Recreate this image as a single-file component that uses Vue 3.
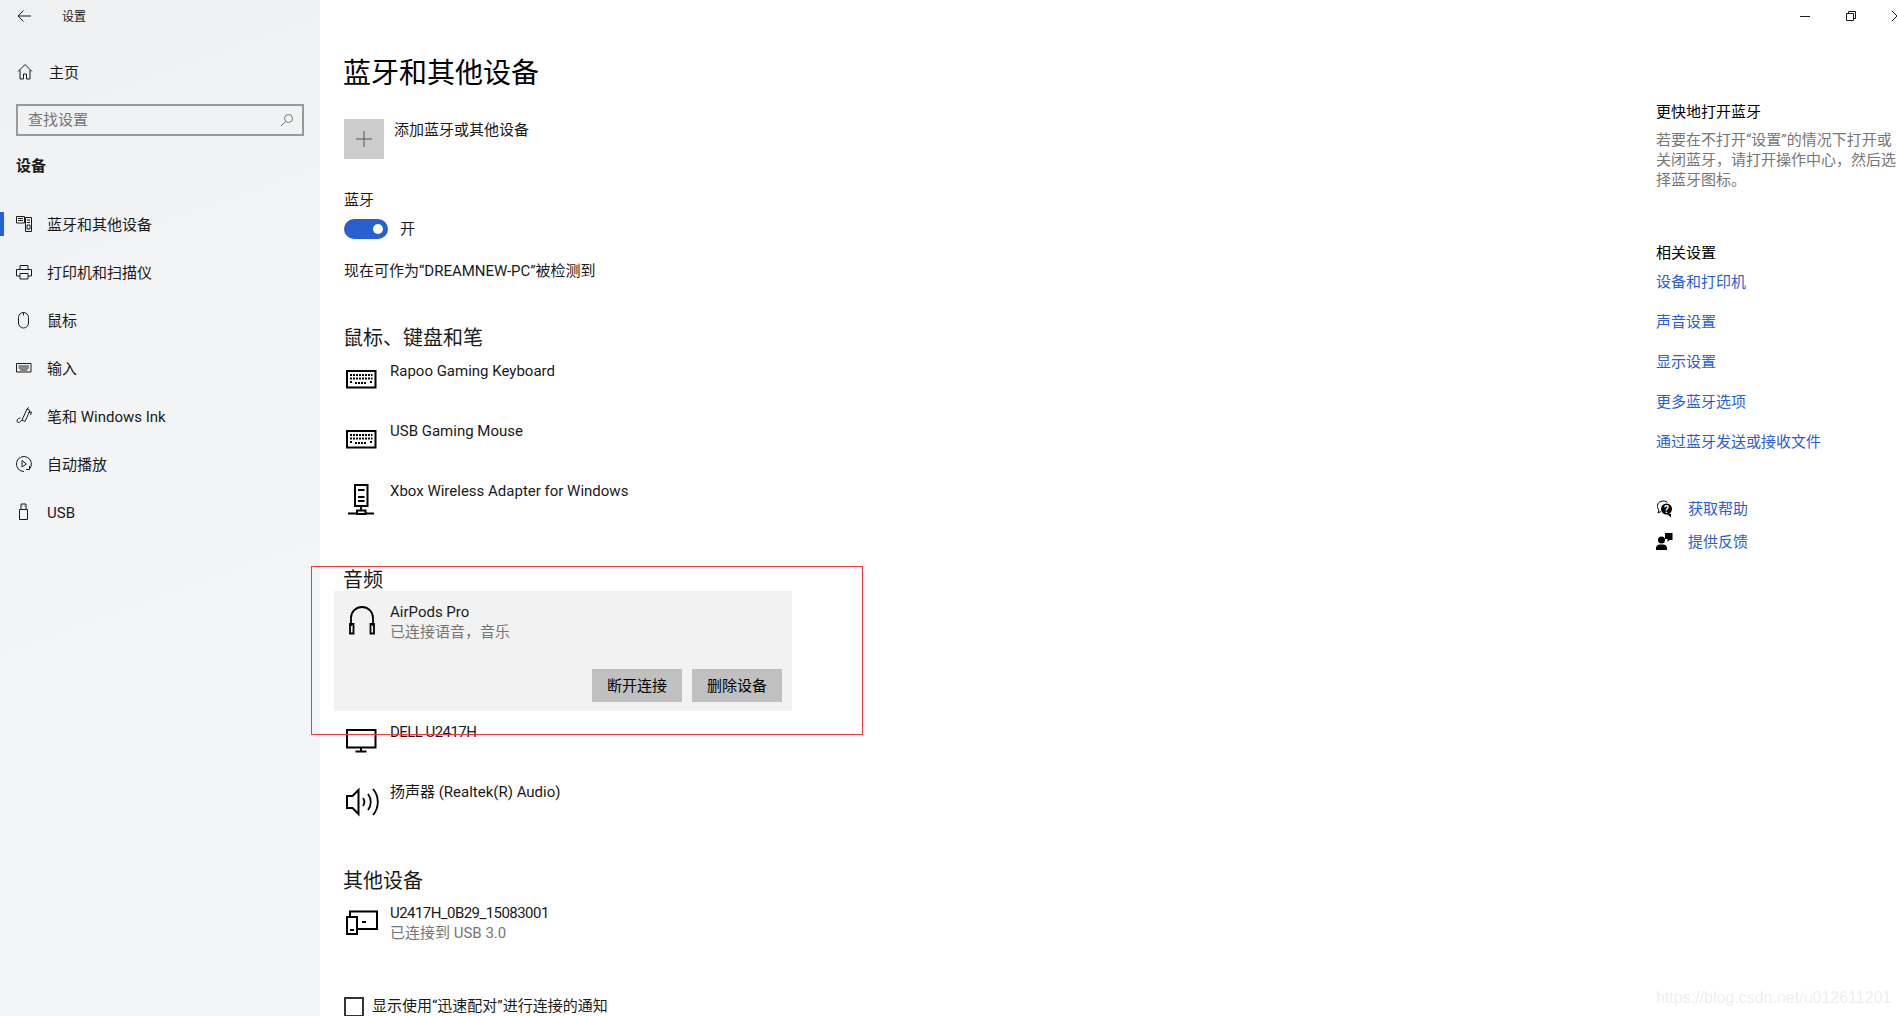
<template>
  <div class="window">
    <aside class="sidebar">
      <div class="titlebar">
        <svg class="back-icon" width="20" height="20" viewBox="0 0 20 20">
          <path d="M7.500 3.500 2 9h13M2 9l5.500 5.500" />
        </svg>
        <span class="app-name">设置</span>
      </div>
      <div class="home-link">
        <svg class="nav-icon" width="20" height="20" viewBox="0 0 20 20">
          <path d="M3 9.500 10 2.500l7 7M5 8v9h3.500v-5h3v5H15V8" />
        </svg>
        <span>主页</span>
      </div>
      <div class="search-box">
        <span>查找设置</span>
        <svg width="14" height="14" viewBox="0 0 14 14">
          <circle cx="8.500" cy="5.500" r="4" />
          <path d="M5.500 8.500 1 13" />
        </svg>
      </div>
      <div class="group-title">设备</div>
      <nav class="nav-list">
        <div v-for="item in navItems" :key="item.label" class="nav-item" :class="{ active: item.active }">
          <svg class="nav-icon" width="20" height="20" viewBox="0 0 20 20">
            <path :d="item.icon" />
          </svg>
          <span>{{ item.label }}</span>
        </div>
      </nav>
    </aside>

    <div class="content">
      <div class="caption">
        <div class="caption-btn">
          <svg width="12" height="12" viewBox="0 0 12 12"><path d="M1 6.500h10" /></svg>
        </div>
        <div class="caption-btn">
          <svg width="12" height="12" viewBox="0 0 12 12"><path d="M1.500 3.500h7v7h-7zM3.500 3.500v-2h7v7h-2" /></svg>
        </div>
        <div class="caption-btn">
          <svg width="12" height="12" viewBox="0 0 12 12"><path d="M1 1l10 10M11 1 1 11" /></svg>
        </div>
      </div>

      <div class="columns">
        <main class="main">
          <h1>蓝牙和其他设备</h1>
          <div class="add-row">
            <div class="add-btn">
              <svg width="16" height="16" viewBox="0 0 16 16"><path d="M8 0v16M0 8h16" /></svg>
            </div>
            <span>添加蓝牙或其他设备</span>
          </div>
          <div class="bt-label">蓝牙</div>
          <div class="toggle-row">
            <div class="toggle"><div class="knob"></div></div>
            <span>开</span>
          </div>
          <div class="discover">现在可作为“DREAMNEW-PC”被检测到</div>

          <h2 class="first-heading">鼠标、键盘和笔</h2>
          <div v-for="name in ['Rapoo Gaming Keyboard', 'USB Gaming Mouse']" :key="name" class="device">
            <svg class="device-icon" width="40" height="40" viewBox="0 0 40 40">
              <path d="M7 11h28.500v16.500H7z" stroke-width="2" />
              <path d="M10 15h22.500M10 18.500h22.500M10 22h2.500M15 23h12M30 22h2.500" stroke-width="2" stroke-dasharray="2 1" />
            </svg>
            <div class="device-text">{{ name }}</div>
          </div>
          <div class="device">
            <svg class="device-icon" width="40" height="40" viewBox="0 0 40 40">
              <path d="M15 5h12.500v21H15z" stroke-width="2" />
              <path d="M18 10h6.500M18 17h6.500M18 21h6.500" stroke-width="2" />
              <path d="M21 26v4M17 30.500h8.500v3.500H17zM8 33.500h9M25.500 33.500H34" stroke-width="2" />
            </svg>
            <div class="device-text">Xbox Wireless Adapter for Windows</div>
          </div>

          <h2 class="audio-heading">音频</h2>
          <div class="device-card">
            <div class="card-top">
              <svg class="device-icon" width="40" height="40" viewBox="0 0 40 40">
                <path d="M11 26V18a11 11 0 0 1 22 0v8" stroke-width="1.800" />
                <path d="M10 24h3.500v9.500H10zM30.500 24H34v9.500h-3.500z" stroke-width="1.800" />
              </svg>
              <div>
                <div class="device-text">AirPods Pro</div>
                <div class="device-sub">已连接语音，音乐</div>
              </div>
            </div>
            <div class="card-actions">
              <button>断开连接</button>
              <button>删除设备</button>
            </div>
          </div>

          <div class="device after-card">
            <svg class="device-icon" width="40" height="40" viewBox="0 0 40 40">
              <path d="M7 9h28.500v17.500H7z" stroke-width="2" />
              <path d="M21 26.500v4M15.500 30.500h11" stroke-width="2" />
            </svg>
            <div class="device-text tight">DELL U2417H</div>
          </div>
          <div class="device">
            <svg class="device-icon" width="40" height="40" viewBox="0 0 40 40">
              <path d="M7 15h5.500l6-6v24l-6-6H7z" stroke-width="2" />
              <path d="M23 17a7 7 0 0 1 0 8M28 13a13 13 0 0 1 0 16M33 8a20 20 0 0 1 0 26" stroke-width="1.800" />
            </svg>
            <div class="device-text">扬声器 (Realtek(R) Audio)</div>
          </div>

          <h2 class="other-heading">其他设备</h2>
          <div class="device other-device">
            <svg class="device-icon" width="40" height="40" viewBox="0 0 40 40">
              <path d="M10 15v-4.500h27v17.500H17" stroke-width="2" />
              <path d="M7 16h10v17H7zM10 29h4M22 21h4" stroke-width="2" />
            </svg>
            <div>
              <div class="device-text tight">U2417H_0B29_15083001</div>
              <div class="device-sub">已连接到 USB 3.0</div>
            </div>
          </div>
          <div class="swift-row">
            <div class="checkbox"></div>
            <span>显示使用“迅速配对”进行连接的通知</span>
          </div>
        </main>

        <aside class="side-panel">
          <div class="panel-title">更快地打开蓝牙</div>
          <p class="panel-text">若要在不打开“设置”的情况下打开或<br />关闭蓝牙，请打开操作中心，然后选<br />择蓝牙图标。</p>
          <div class="related-title">相关设置</div>
          <div class="links">
            <a v-for="link in relatedLinks" :key="link">{{ link }}</a>
          </div>
          <div class="help-row first-help">
            <svg width="20" height="20" viewBox="0 0 20 20">
              <path class="thin" d="M5 2.500C1 3 .5 9 3 11l-1 3 3-1.500" />
              <path class="thin" d="M5 2.500c2.500-1 5-.5 6.500 1" />
              <circle class="solid" cx="10.500" cy="10" r="5.500" />
              <path class="solid" d="M11 15h4v3.500z" />
              <text x="8" y="13.500" class="help-mark">?</text>
            </svg>
            <a>获取帮助</a>
          </div>
          <div class="help-row">
            <svg width="20" height="20" viewBox="0 0 20 20">
              <circle class="solid" cx="5.500" cy="8" r="3.500" />
              <path class="solid" d="M0 18v-2.500a4 4 0 0 1 4-3h3a4 4 0 0 1 4 3V18zM9 1h7.500v7h-3l-2 2V7H9z" />
            </svg>
            <a>提供反馈</a>
          </div>
        </aside>
      </div>
    </div>

    <div class="highlight"></div>
    <div class="watermark">https://blog.csdn.net/u012611201</div>
  </div>
</template>

<script setup>
const navItems = [
  {
    label: '蓝牙和其他设备',
    active: true,
    icon: 'M2.500 2.500h8v6.500h-8zM4 4.500h5M4 6.500h5M11.500 3.500h6v14h-6zM13 6h3M13 8.500h3M13 11h3v4h-3z'
  },
  {
    label: '打印机和扫描仪',
    icon: 'M6 7.500V3.500h8v4M6 14H2.500V7.500h15V14H14M6 11.500h8v5.500H6z'
  },
  {
    label: '鼠标',
    icon: 'M4.500 7.500a5 5 0 0 1 10 0v5.500a5 5 0 0 1-10 0zM9.500 2.500v3'
  },
  {
    label: '输入',
    icon: 'M2.500 5.500h14.500v8.500H2.500zM4.500 8h10.500M4.500 10h10.500M6 12h7.500'
  },
  {
    label: '笔和 Windows Ink',
    icon: 'M8 14 13 3l3 1.500-5 11zM13 3l2-1.500M14.500 6.500l3-.5-1 3M8 14c-2 3-5 3-5 1s2-3 3.500-3'
  },
  {
    label: '自动播放',
    icon: 'M10 17.500a7.500 7.500 0 1 1 5.500-2.500M15.500 12v3.500H12M8 6.500l4.500 3.500-4.500 3z'
  },
  {
    label: 'USB',
    icon: 'M5.500 7.500h8v10h-8zM7 7.500v-5.500h5v5.500M8.500 4h.5M10.500 4h.5'
  }
]

const relatedLinks = ['设备和打印机', '声音设置', '显示设置', '更多蓝牙选项', '通过蓝牙发送或接收文件']
</script>

<style>
html,
body {
  margin: 0;
  background: #fff;
}
</style>

<style scoped>
.window {
  position: relative;
  display: flex;
  width: 1897px;
  height: 1016px;
  overflow: hidden;
  background: #fff;
  color: #1a1a1a;
  font-family: Roboto, "Noto Sans CJK SC", sans-serif;
  font-size: 15px;
  line-height: 20px;
}

svg {
  flex: none;
  fill: none;
  stroke: currentColor;
}

.sidebar {
  flex: none;
  width: 320px;
  background: linear-gradient(160deg, #eef0f2 0%, #f3f4f5 35%, #f3f5f8 100%);
}

.titlebar {
  display: flex;
  align-items: center;
  height: 32px;
  padding: 1px 0 0 16px;
  box-sizing: border-box;
}

.app-name {
  margin-left: 26px;
  font-size: 12px;
}

.home-link {
  display: flex;
  align-items: center;
  gap: 14px;
  height: 48px;
  margin-top: 16px;
  padding-left: 15px;
}

.home-link span,
.nav-item span {
  padding-top: 2px;
}

.search-box {
  display: flex;
  align-items: center;
  justify-content: space-between;
  box-sizing: border-box;
  width: 288px;
  height: 32px;
  margin: 8px 0 0 16px;
  padding: 0 8px 1px 10px;
  border: 2px solid #999;
  color: #767676;
}

.group-title {
  margin: 20px 0 0 16px;
  font-weight: 700;
}

.nav-list {
  margin-top: 24px;
}

.nav-item {
  position: relative;
  display: flex;
  align-items: center;
  gap: 13px;
  height: 48px;
  padding-left: 14px;
}

.nav-item.active::before {
  content: "";
  position: absolute;
  left: 0;
  top: 12px;
  width: 4px;
  height: 24px;
  background: #2a5fd0;
}

.content {
  flex: 1;
  min-width: 0;
}

.caption {
  display: flex;
  justify-content: flex-end;
  height: 32px;
  margin-right: -23px;
}

.caption-btn {
  display: flex;
  align-items: center;
  justify-content: center;
  width: 46px;
  height: 32px;
}

.columns {
  display: flex;
}

.main {
  flex: 1;
  padding-left: 24px;
}

h1 {
  margin: 22px 0 0 -1px;
  font-size: 28px;
  font-weight: 400;
  line-height: 40px;
  color: #000;
}

h2 {
  margin: 0 0 0 -1px;
  font-size: 20px;
  font-weight: 400;
  line-height: 28px;
}

.add-row {
  display: flex;
  gap: 10px;
  margin-top: 25px;
}

.add-row span {
  margin-top: 1px;
}

.bt-label {
  margin-top: 31px;
}

.add-btn {
  display: flex;
  align-items: center;
  justify-content: center;
  width: 40px;
  height: 40px;
  background: #ccc;
  color: #555;
}

.toggle-row {
  display: flex;
  align-items: center;
  gap: 12px;
  margin-top: 9px;
}

.toggle {
  display: flex;
  align-items: center;
  justify-content: flex-end;
  width: 44px;
  height: 20px;
  padding-right: 5px;
  box-sizing: border-box;
  border-radius: 10px;
  background: #2a5fd0;
}

.knob {
  width: 10px;
  height: 10px;
  border-radius: 50%;
  background: #fff;
}

.discover {
  margin-top: 22px;
}

.first-heading {
  margin-top: 43px;
}

.device {
  display: flex;
  height: 60px;
  box-sizing: border-box;
  padding-top: 9px;
  margin-left: -4px;
  color: #1a1a1a;
}

.device-icon {
  margin-top: -1px;
  margin-right: 10px;
  color: #000;
}

.device-sub {
  color: #767676;
}

.tight {
  letter-spacing: -0.55px;
}

.audio-heading {
  margin-top: 34px;
}

.device-card {
  box-sizing: border-box;
  width: 458px;
  height: 120px;
  margin: -3px 0 0 -10px;
  padding: 9px 10px 9px 6px;
  background: #f2f2f2;
}

.card-top {
  display: flex;
  height: 69px;
  padding-top: 2px;
  box-sizing: border-box;
}

.card-top .device-icon {
  margin-top: -2px;
}

.card-actions {
  display: flex;
  justify-content: flex-end;
  gap: 10px;
}

.card-actions button {
  width: 90px;
  height: 33px;
  padding: 0;
  border: 0;
  background: #c0c0c0;
  color: #000;
  font: inherit;
}

.after-card {
  margin-top: 2px;
}

.other-heading {
  margin-top: 34px;
}

.other-device {
  margin-top: -2px;
  padding-top: 10px;
}

.other-device .device-icon {
  margin-top: -2px;
}

.swift-row {
  display: flex;
  margin-top: 43px;
}

.checkbox {
  flex: none;
  box-sizing: border-box;
  width: 20px;
  height: 20px;
  margin: 1px 8px 0 0;
  border: 2px solid #333;
}

.side-panel {
  flex: none;
  width: 241px;
  white-space: nowrap;
}

.panel-title {
  margin-top: 70px;
  color: #000;
}

.panel-text {
  margin: 8px 0 0;
  color: #767676;
}

.related-title {
  margin-top: 53px;
  color: #000;
}

.links {
  display: flex;
  flex-direction: column;
  gap: 20px;
  margin-top: 9px;
}

a {
  color: #2a5fd0;
}

.help-row {
  display: flex;
  gap: 12px;
  margin-top: 13px;
  color: #000;
}

.first-help {
  margin-top: 47px;
}

.solid {
  fill: currentColor;
  stroke: none;
}

.thin {
  stroke-width: 1;
}

.help-mark {
  fill: #fff;
  stroke: none;
  font-size: 10px;
  font-weight: 700;
}

.highlight {
  position: absolute;
  left: 311px;
  top: 566px;
  width: 550px;
  height: 167px;
  border: 1px solid #f43a3f;
  pointer-events: none;
}

.watermark {
  position: absolute;
  left: 1656px;
  top: 988px;
  color: #eeeeee;
  font-family: "Liberation Sans", sans-serif;
  font-size: 16px;
  line-height: 20px;
  white-space: nowrap;
  filter: blur(0.5px);
}
</style>
